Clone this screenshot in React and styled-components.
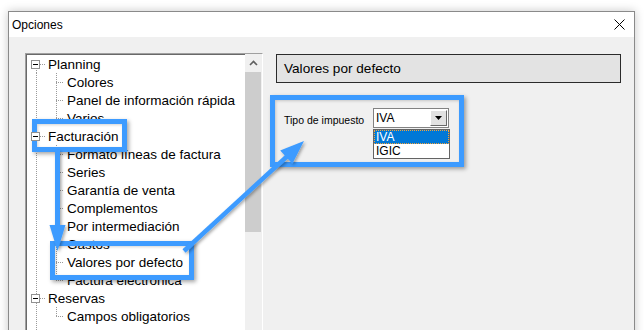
import React from 'react';
import styled, { createGlobalStyle } from 'styled-components';

const GlobalStyle = createGlobalStyle`
  html, body { margin: 0; padding: 0; background: #fff; overflow: hidden; }
  body { font-family: "Liberation Sans", Arial, sans-serif; color: #000; }
`;

const Page = styled.div`
  position: relative;
  width: 644px;
  height: 330px;
  overflow: hidden;
  box-sizing: border-box;
  padding: 11px 0 0 8px;
`;

const Window = styled.div`
  width: 627px;
  height: 380px;
  box-sizing: border-box;
  border: 1px solid #8a8a8a;
  box-shadow: 0 0 9px rgba(0, 0, 0, 0.22);
  background: #f0f0f0;
  display: flex;
  flex-direction: column;
`;

const TitleBar = styled.div`
  height: 25px;
  flex: none;
  background: #fff;
  display: flex;
  align-items: center;
  justify-content: space-between;
  padding: 0 9px 0 3px;
  font-size: 12px;
`;

const Body = styled.div`
  flex: 1;
  display: flex;
  align-items: flex-start;
  padding: 16px 0 0 16px;
`;

const TreePanel = styled.div`
  width: 238px;
  height: 320px;
  box-sizing: border-box;
  display: flex;
  background: #fff;
  border-style: solid;
  border-width: 1px;
  border-color: #a0a0a0 #fff #fff #a0a0a0;
`;

const TreeList = styled.div`
  flex: 1;
  padding-top: 1px;
  box-shadow: inset 1px 1px 0 #696969;
`;

const Row = styled.div`
  height: 18px;
  display: flex;
  align-items: stretch;
  font-size: 13.5px;
  white-space: nowrap;
`;

const dots = (dir) =>
  `repeating-linear-gradient(${dir}, #9a9a9a 0 1px, transparent 1px 2px)`;

const Guide = styled.div`
  position: relative;
  width: 20px;
  flex: none;
  display: flex;
  align-items: center;
  justify-content: center;
  &::before {
    content: '';
    display: ${(p) => (p.$vert === 'none' ? 'none' : 'block')};
    position: absolute;
    left: 10px;
    width: 1px;
    top: ${(p) => (p.$vert === 'bottom' ? '9px' : '0')};
    bottom: ${(p) => (p.$vert === 'top' ? '9px' : '0')};
    background: ${dots('to bottom')};
  }
  &::after {
    content: '';
    display: ${(p) => (p.$horiz ? 'block' : 'none')};
    position: absolute;
    left: 10px;
    top: 9px;
    height: 1px;
    width: ${(p) => p.$horiz || 0}px;
    background: ${dots('to right')};
  }
`;

const Expander = styled.span`
  position: relative;
  z-index: 1;
  width: 9px;
  height: 9px;
  box-sizing: border-box;
  border: 1px solid #919191;
  background: #fff;
  display: flex;
  align-items: center;
  justify-content: center;
  margin-left: -1px;
  &::after {
    content: '';
    width: 5px;
    height: 1px;
    background: #000;
  }
`;

const Label = styled.span`
  display: flex;
  align-items: center;
  margin-left: ${(p) => (p.$child ? 1 : 2)}px;
`;

const Scrollbar = styled.div`
  width: 17px;
  flex: none;
  background: #f0f0f0;
  display: flex;
  flex-direction: column;
`;

const ScrollButton = styled.div`
  height: 18px;
  display: flex;
  align-items: center;
  justify-content: center;
`;

const Thumb = styled.div`
  height: 160px;
  margin-right: 1px;
  background: #cdcdcd;
`;

const RightPanel = styled.div`
  margin-left: 13px;
  width: 345px;
  display: flex;
  flex-direction: column;
`;

const HeaderBox = styled.div`
  margin-top: 1px;
  height: 29px;
  box-sizing: border-box;
  border: 1px solid #2b2b2b;
  background: #e3e3e3;
  display: flex;
  align-items: center;
  padding: 0 0 1px 7px;
  font-size: 13.6px;
`;

const FormRow = styled.div`
  margin-top: 25px;
  padding-left: 8px;
  display: flex;
  align-items: flex-start;
`;

const FieldLabel = styled.div`
  width: 89px;
  font-size: 10.5px;
  line-height: 20px;
  padding-top: 2px;
`;

const ComboWrap = styled.div`
  display: flex;
  flex-direction: column;
  width: 77px;
`;

const Combo = styled.div`
  height: 20px;
  width: 76px;
  box-sizing: border-box;
  border: 1px solid #828282;
  background: #fff;
  display: flex;
  align-items: center;
  justify-content: space-between;
  padding: 1px;
  font-size: 12px;
`;

const ComboText = styled.span`
  padding-left: 1px;
`;

const DropButton = styled.span`
  width: 17px;
  height: 16px;
  box-sizing: border-box;
  background: #e1e1e1;
  border-style: solid;
  border-width: 1px;
  border-color: #fff #696969 #696969 #fff;
  display: flex;
  align-items: center;
  justify-content: center;
`;

const ListBox = styled.div`
  margin-top: 1px;
  border: 1px solid #646464;
  background: #fff;
  font-size: 12px;
`;

const ListItem = styled.div`
  height: 14px;
  line-height: 14px;
  padding-left: 2px;
  box-sizing: border-box;
  background: ${(p) => (p.$selected ? '#0078d7' : 'transparent')};
  color: ${(p) => (p.$selected ? '#fff' : '#000')};
  outline: ${(p) => (p.$selected ? '1px dotted #f3a33a' : 'none')};
  outline-offset: -1px;
`;

const Callout = styled.div`
  position: absolute;
  left: ${(p) => p.$x}px;
  top: ${(p) => p.$y}px;
  width: ${(p) => p.$w}px;
  height: ${(p) => p.$h}px;
  box-sizing: border-box;
  border: 5px solid #3d9bff;
  box-shadow: 2px 2px 4px rgba(0, 0, 0, 0.35), inset 1px 1px 3px rgba(0, 0, 0, 0.18);
  pointer-events: none;
`;

const ArrowLayer = styled.svg`
  position: absolute;
  left: 0;
  top: 0;
  width: 644px;
  height: 330px;
  pointer-events: none;
  overflow: visible;
`;

const tree = [
  { text: 'Planning', root: true, vert: 'bottom' },
  { text: 'Colores' },
  { text: 'Panel de información rápida' },
  { text: 'Varios', last: true },
  { text: 'Facturación', root: true },
  { text: 'Formato líneas de factura' },
  { text: 'Series' },
  { text: 'Garantía de venta' },
  { text: 'Complementos' },
  { text: 'Por intermediación' },
  { text: 'Gastos' },
  { text: 'Valores por defecto' },
  { text: 'Factura electrónica', last: true },
  { text: 'Reservas', root: true },
  { text: 'Campos obligatorios', last: true },
  { text: 'Formas de pago', root: true },
];

function TreeRow({ item }) {
  if (item.root) {
    return (
      <Row>
        <Guide $vert={item.vert || 'full'} $horiz={10}>
          <Expander />
        </Guide>
        <Label>{item.text}</Label>
      </Row>
    );
  }
  return (
    <Row>
      <Guide $vert="full" />
      <Guide $vert={item.last ? 'top' : 'full'} $horiz={8} />
      <Label $child>{item.text}</Label>
    </Row>
  );
}

export default function App() {
  return (
    <>
      <GlobalStyle />
      <Page>
        <Window>
          <TitleBar>
            <span>Opciones</span>
            <svg width="11" height="11" viewBox="0 0 11 11">
              <path d="M0.5 0.5 L10.5 10.5 M10.5 0.5 L0.5 10.5" stroke="#000" strokeWidth="1" fill="none" />
            </svg>
          </TitleBar>
          <Body>
            <TreePanel>
              <TreeList>
                {tree.map((item, i) => (
                  <TreeRow key={i} item={item} />
                ))}
              </TreeList>
              <Scrollbar>
                <ScrollButton>
                  <svg width="9" height="6" viewBox="0 0 9 6">
                    <path d="M1 5 L4.5 1.5 L8 5" stroke="#606060" strokeWidth="1.6" fill="none" />
                  </svg>
                </ScrollButton>
                <Thumb />
              </Scrollbar>
            </TreePanel>
            <RightPanel>
              <HeaderBox>Valores por defecto</HeaderBox>
              <FormRow>
                <FieldLabel>Tipo de impuesto</FieldLabel>
                <ComboWrap>
                  <Combo>
                    <ComboText>IVA</ComboText>
                    <DropButton>
                      <svg width="7" height="4" viewBox="0 0 7 4">
                        <path d="M0 0 H7 L3.5 4 Z" fill="#000" />
                      </svg>
                    </DropButton>
                  </Combo>
                  <ListBox>
                    <ListItem $selected>IVA</ListItem>
                    <ListItem>IGIC</ListItem>
                  </ListBox>
                </ComboWrap>
              </FormRow>
            </RightPanel>
          </Body>
        </Window>

        <Callout $x={32} $y={119} $w={95} $h={33} />
        <Callout $x={50} $y={241} $w={144} $h={39} />
        <Callout $x={270} $y={95} $w={194} $h={72} />

        <ArrowLayer viewBox="0 0 644 330">
          <defs>
            <filter id="sh" x="-20%" y="-20%" width="140%" height="140%">
              <feDropShadow dx="1.5" dy="1.5" stdDeviation="1.5" floodColor="#000" floodOpacity="0.35" />
            </filter>
          </defs>
          <g filter="url(#sh)" fill="#3d9bff" stroke="#3d9bff">
            <line x1="57.5" y1="150" x2="57.5" y2="228" strokeWidth="5" />
            <polygon points="49.5,225 65.5,225 57.5,251" stroke="none" />
            <line x1="184" y1="251" x2="288" y2="155.5" strokeWidth="4.5" />
            <polygon points="304,141 292.4,163.8 280.2,150.6" stroke="none" />
          </g>
        </ArrowLayer>
      </Page>
    </>
  );
}
